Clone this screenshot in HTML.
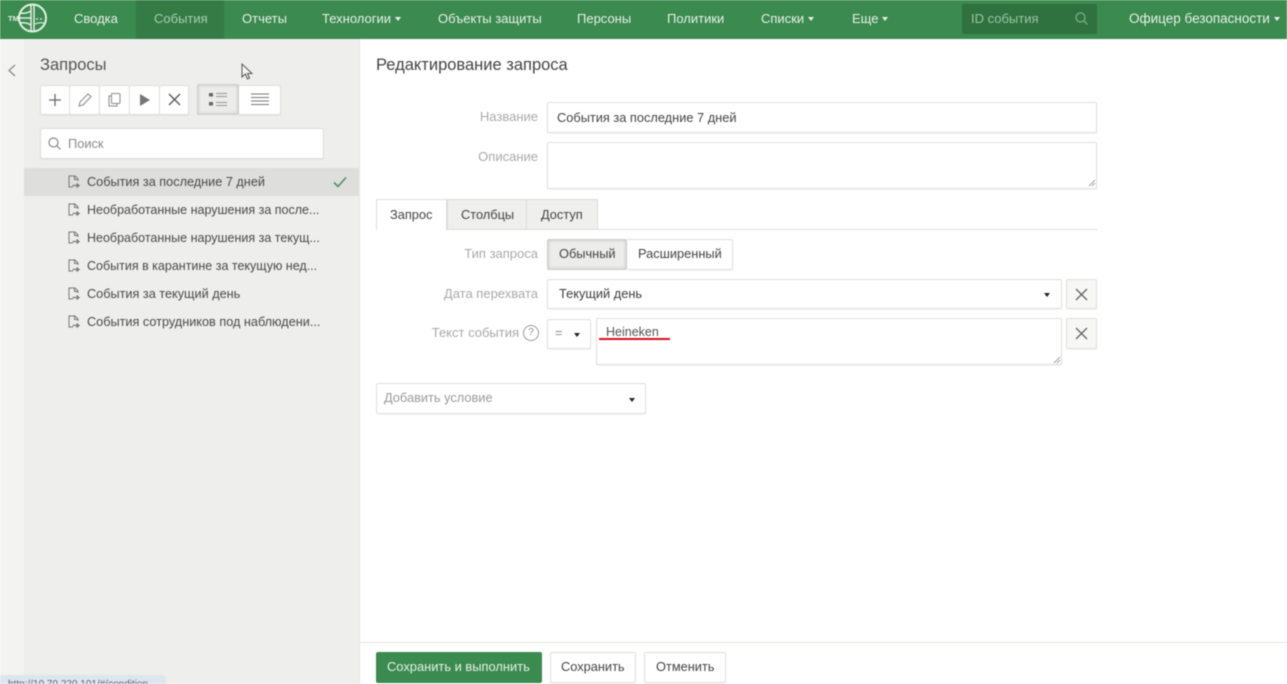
<!DOCTYPE html>
<html lang="ru"><head><meta charset="utf-8"><title>Запросы</title>
<style>
html,body{margin:0;padding:0;width:1287px;height:684px;overflow:hidden;background:#fff}
body{font-family:"Liberation Sans","Noto Sans CJK SC",sans-serif;font-size:12.8px;color:#444;position:relative;filter:blur(.4px)}
.a{position:absolute;white-space:nowrap}
.box{position:absolute;box-sizing:border-box;background:#fff;border:1px solid #dfdfdd;border-radius:2px;box-shadow:0 1px 1px rgba(0,0,0,.05)}
.nav{color:#e6f1e8;top:12px;font-size:13px;line-height:14px;position:absolute;white-space:nowrap}
.caret{display:inline-block;width:0;height:0;border-left:3.5px solid transparent;border-right:3.5px solid transparent;border-top:4px solid currentColor;vertical-align:2px;margin-left:4px}
.lbl{position:absolute;white-space:nowrap;text-align:right;color:#a9a9a9;right:749px;line-height:14px;font-size:13px}
.it{position:absolute;left:87px;color:#4a4a4a;white-space:nowrap;line-height:14px;font-size:12.7px}
.lg{font-size:12.5px}
.ic{position:absolute;left:67px}
svg{position:absolute;overflow:visible}
</style></head><body>
<div class="a" style="left:0;top:0;width:1287px;height:39px;background:#3b8a4f"></div>
<div class="a" style="left:136px;top:0;width:88px;height:39px;background:#347b46"></div>
<svg style="left:0;top:0" width="50" height="38" fill="none" stroke="#e3f0e5">
<circle cx="32.500" cy="18" r="13.500" stroke-width="2"/>
<path d="M31 5V31M34 5V31" stroke-width="1.500"/>
<path d="M20 13Q26 14 31 11M19 18H31M20 23Q26 22 31 25" stroke-width="1.500"/>
<path d="M36 19h2M40 19h2M35 24Q39 22 44 23" stroke-width="1.200"/>
<text x="8" y="21" font-size="7.500" font-weight="700" fill="#e3f0e5" stroke="none" font-family="Liberation Sans">ТМ</text></svg>
<span class="nav" style="left:74px">Сводка</span>
<span class="nav" style="left:154px;color:#a9d0b1">События</span>
<span class="nav" style="left:242px">Отчеты</span>
<span class="nav" style="left:322px">Технологии<i class="caret"></i></span>
<span class="nav" style="left:438px">Объекты защиты</span>
<span class="nav" style="left:577px">Персоны</span>
<span class="nav" style="left:667px">Политики</span>
<span class="nav" style="left:761px">Списки<i class="caret"></i></span>
<span class="nav" style="left:852px">Еще<i class="caret"></i></span>
<div class="a" style="left:962px;top:4px;width:135px;height:30px;background:#2f7240;border-radius:2px"></div>
<span class="nav" style="left:971px;color:#9cc5a5">ID события</span>
<svg style="left:1075px;top:12px" width="14" height="14" fill="none" stroke="#83b08d" stroke-width="1.200"><circle cx="5.500" cy="5.500" r="4.500"/><path d="M9 9l3.500 3.500"/></svg>
<span class="nav" style="left:1129px;font-size:13.500px">Офицер безопасности<i class="caret"></i></span>

<div class="a" style="left:0;top:39px;width:24px;height:645px;background:#f3f3f1"></div>
<div class="a" style="left:24px;top:39px;width:335px;height:645px;background:#eeeeec"></div>
<div class="a" style="left:359px;top:39px;width:1px;height:645px;background:#e6e6e4"></div>
<svg style="left:7px;top:64px" width="10" height="13" fill="none" stroke="#8a8a8a" stroke-width="1.300"><path d="M8 1L2 6.500L8 12"/></svg>
<span class="a" style="left:40px;top:57px;font-size:16.500px;color:#555;line-height:17px">Запросы</span>
<svg style="left:241px;top:63px" width="13" height="18" fill="#f4f4f4" stroke="#555" stroke-width="1"><path d="M1 1V14L4.300 11L6.500 16L8.500 15L6.500 10.500H11Z"/></svg>

<div class="box" style="left:40px;top:85px;width:30px;height:30px;border-radius:2px 0 0 2px"></div>
<div class="box" style="left:70px;top:85px;width:30px;height:30px;border-left:0"></div>
<div class="box" style="left:100px;top:85px;width:30px;height:30px;border-left:0"></div>
<div class="box" style="left:130px;top:85px;width:30px;height:30px;border-left:0"></div>
<div class="box" style="left:160px;top:85px;width:29px;height:30px;border-left:0"></div>
<div class="box" style="left:197px;top:84px;width:42px;height:31px;background:#ececea;border:1px solid #cfcfcd;box-shadow:inset 0 0 3px #bdbdbd"></div>
<div class="box" style="left:239px;top:85px;width:42px;height:30px;border-left:0"></div>
<svg style="left:48px;top:93px" width="14" height="14" stroke="#666" stroke-width="1.300"><path d="M7 1V13M1 7H13"/></svg>
<svg style="left:78px;top:93px" width="14" height="14" fill="none" stroke="#888" stroke-width="1"><path d="M1 13L2 9L10 1L13 3.500L5 12Z"/></svg>
<svg style="left:108px;top:93px" width="13" height="14" fill="none" stroke="#888" stroke-width="1"><rect x="3.500" y="0.500" width="8.500" height="10" rx="1"/><path d="M3 3H1V13H9V11"/></svg>
<svg style="left:140px;top:94px" width="10" height="12" fill="#777"><path d="M0 0L10 6L0 12Z"/></svg>
<svg style="left:168px;top:93px" width="13" height="13" stroke="#555" stroke-width="1.300"><path d="M1 1L12 12M12 1L1 12"/></svg>
<svg style="left:209px;top:92px" width="19" height="15" stroke="#777" fill="#666"><rect x="0" y="1" width="4" height="3.500" stroke="none"/><rect x="0" y="10" width="4" height="3.500" stroke="none"/><path d="M7 1.500H18M7 4.500H18M7 10.500H18M7 13.500H18" stroke-width="0.800"/></svg>
<svg style="left:251px;top:93px" width="19" height="13" stroke="#777" stroke-width="0.900"><path d="M0 1H18M0 4.500H18M0 8H18M0 11.500H18"/></svg>

<div class="box" style="left:40px;top:128px;width:284px;height:31px"></div>
<svg style="left:48px;top:137px" width="13" height="13" fill="none" stroke="#888" stroke-width="1.200"><circle cx="5.500" cy="5.500" r="4.500"/><path d="M9 9L12.500 12.500"/></svg>
<span class="a" style="left:68px;top:137px;color:#8b8b8b;line-height:14px">Поиск</span>

<div class="a" style="left:24px;top:168px;width:335px;height:28px;background:#dededc"></div>
<svg width="0" height="0" style="left:0;top:0"><defs><g id="doc" fill="none" stroke="#777" stroke-width="1"><path d="M6 12H2V1H8L11 4V6M7.500 1V4.500H11"/><path d="M5.500 10.500H11.500M9.500 8.500L12 10.500L9.500 12.500" stroke-width="1.300"/></g></defs></svg>
<svg class="ic" style="top:175px" width="13" height="14"><use href="#doc"/></svg>
<svg class="ic" style="top:203px" width="13" height="14"><use href="#doc"/></svg>
<svg class="ic" style="top:231px" width="13" height="14"><use href="#doc"/></svg>
<svg class="ic" style="top:259px" width="13" height="14"><use href="#doc"/></svg>
<svg class="ic" style="top:287px" width="13" height="14"><use href="#doc"/></svg>
<svg class="ic" style="top:315px" width="13" height="14"><use href="#doc"/></svg>
<span class="it" style="top:175px">События за последние 7 дней</span>
<span class="it lg" style="top:203px">Необработанные нарушения за после...</span>
<span class="it lg" style="top:231px">Необработанные нарушения за текущ...</span>
<span class="it lg" style="top:259px">События в карантине за текущую нед...</span>
<span class="it" style="top:287px">События за текущий день</span>
<span class="it" style="top:315px">События сотрудников под наблюдени...</span>
<svg style="left:333px;top:176px" width="14" height="12" fill="none" stroke="#4e9160" stroke-width="1.600"><path d="M1 6.500L5 10.500L13 1.500"/></svg>

<span class="a" style="left:376px;top:57px;font-size:16.500px;color:#444;line-height:17px">Редактирование запроса</span>
<span class="lbl" style="top:110px">Название</span>
<div class="box" style="left:547px;top:102px;width:550px;height:31px"></div>
<span class="a" style="left:557px;top:111px;line-height:14px;color:#444">События за последние 7 дней</span>
<span class="lbl" style="top:150px">Описание</span>
<div class="box" style="left:547px;top:142px;width:550px;height:47px"></div>
<svg style="left:1088px;top:179px" width="8" height="8" stroke="#888" stroke-width="0.800"><path d="M1 7L7 1M4 7L7 4"/></svg>

<div class="a" style="left:376px;top:229px;width:721px;height:1px;background:#dcdcda"></div>
<div class="a" style="left:447px;top:199px;width:151px;height:30px;background:#efefed;border:1px solid #dcdcda;border-bottom:0;box-sizing:border-box"></div>
<div class="a" style="left:526px;top:199px;width:1px;height:30px;background:#dcdcda"></div>
<div class="a" style="left:376px;top:199px;width:71px;height:31px;background:#fff;border:1px solid #dcdcda;border-bottom:0;box-sizing:border-box"></div>
<span class="a" style="left:390px;top:208px;line-height:14px">Запрос</span>
<span class="a" style="left:461px;top:208px;line-height:14px">Столбцы</span>
<span class="a" style="left:541px;top:208px;line-height:14px">Доступ</span>

<span class="lbl" style="top:247px">Тип запроса</span>
<div class="box" style="left:547px;top:239px;width:80px;height:31px;background:#ececea;border-color:#cfcfcd;box-shadow:inset 0 0 3px #bdbdbd"></div>
<div class="box" style="left:627px;top:239px;width:106px;height:31px;border-left:0"></div>
<span class="a" style="left:559px;top:247px;line-height:14px">Обычный</span>
<span class="a" style="left:638px;top:247px;line-height:14px">Расширенный</span>

<span class="lbl" style="top:287px">Дата перехвата</span>
<div class="box" style="left:547px;top:279px;width:515px;height:30px"></div>
<span class="a" style="left:559px;top:287px;line-height:14px;color:#3f3f3f">Текущий день</span>
<i class="a" style="left:1044px;top:293px;border-left:3.500px solid transparent;border-right:3.500px solid transparent;border-top:4px solid #222"></i>
<div class="box" style="left:1066px;top:279px;width:31px;height:30px;background:#f7f7f6"></div>
<svg style="left:1076px;top:289px" width="11" height="11" stroke="#666" stroke-width="1.300"><path d="M0 0L11 11M11 0L0 11"/></svg>

<span class="lbl" style="top:326px;right:768px">Текст события</span>
<div class="a" style="left:523px;top:325px;width:16px;height:16px;box-sizing:border-box;border:1px solid #999;border-radius:50%;color:#888;font-size:10px;line-height:14px;text-align:center">?</div>
<div class="box" style="left:547px;top:319px;width:44px;height:30px"></div>
<span class="a" style="left:555px;top:326px;color:#888;line-height:14px">=</span>
<i class="a" style="left:574px;top:333px;border-left:3.500px solid transparent;border-right:3.500px solid transparent;border-top:4px solid #222"></i>
<div class="box" style="left:596px;top:318px;width:466px;height:47px"></div>
<span class="a" style="left:606px;top:325px;line-height:14px;color:#555;font-size:12.500px">Heineken</span>
<div class="a" style="left:599px;top:338px;width:71px;height:2px;background:#d4101c"></div>
<svg style="left:1053px;top:356px" width="8" height="8" stroke="#888" stroke-width="0.800"><path d="M1 7L7 1M4 7L7 4"/></svg>
<div class="box" style="left:1066px;top:318px;width:31px;height:31px;background:#f7f7f6"></div>
<svg style="left:1076px;top:328px" width="11" height="11" stroke="#666" stroke-width="1.300"><path d="M0 0L11 11M11 0L0 11"/></svg>

<div class="box" style="left:376px;top:383px;width:270px;height:31px"></div>
<span class="a" style="left:384px;top:391px;line-height:14px;color:#9a9a9a">Добавить условие</span>
<i class="a" style="left:629px;top:398px;border-left:3.500px solid transparent;border-right:3.500px solid transparent;border-top:4px solid #222"></i>

<div class="a" style="left:360px;top:642px;width:927px;height:1px;background:#e4e4e2"></div>
<div class="a" style="left:376px;top:652px;width:166px;height:31px;background:#3b8a4f;border-radius:2px"></div>
<span class="a" style="left:387px;top:660px;line-height:14px;color:#e6f1e8;font-size:12.900px">Сохранить и выполнить</span>
<div class="box" style="left:550px;top:652px;width:86px;height:31px"></div>
<span class="a" style="left:561px;top:660px;line-height:14px">Сохранить</span>
<div class="box" style="left:644px;top:652px;width:82px;height:31px"></div>
<span class="a" style="left:656px;top:660px;line-height:14px">Отменить</span>

<div class="a" style="left:0;top:675px;width:166px;height:9px;background:#dce6ee;border-radius:0 4px 0 0;overflow:hidden"><span class="a" style="left:8px;top:4px;font-size:10px;line-height:12px;color:#667">http://10.70.220.101/#/condition</span></div>
</body></html>
